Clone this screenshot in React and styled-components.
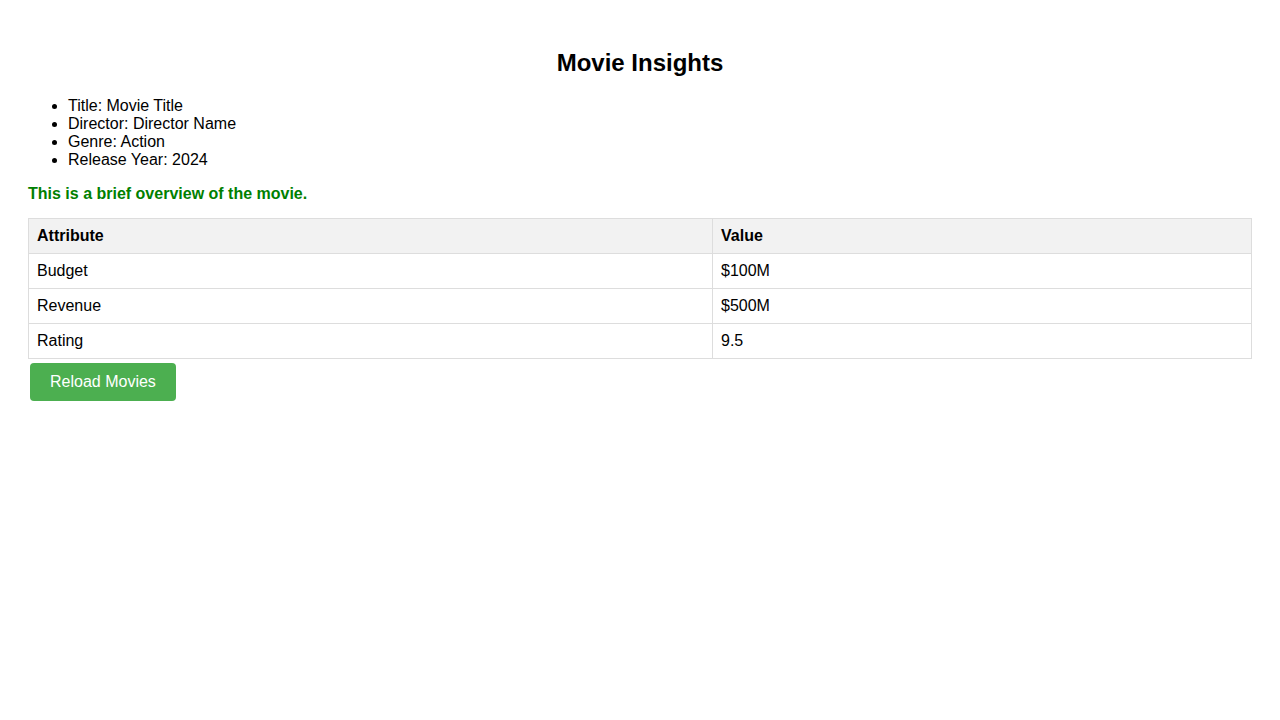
import React from "react";
import styled, { createGlobalStyle } from "styled-components";

const GlobalStyle = createGlobalStyle`
  body {
    margin: 8px;
    font-family: "Liberation Sans", Arial, sans-serif;
    font-size: 16px;
    color: #000;
    background: #fff;
  }
`;

const Container = styled.div`
  padding: 20px;
`;

const Title = styled.h2`
  text-align: center;
  font-size: 24px;
  font-weight: bold;
  margin: 21px 0 20px;
`;

const InfoList = styled.ul`
  margin: 16px 0;
  padding-left: 40px;
`;

const Overview = styled.p`
  color: green;
  font-weight: bold;
  margin: 16px 0 15px;
`;

const Table = styled.table`
  width: 100%;
  border-collapse: collapse;
`;

const Th = styled.th`
  border: 1px solid #ddd;
  padding: 8px;
  text-align: left;
  background: #f2f2f2;
`;

const Td = styled.td`
  border: 1px solid #ddd;
  padding: 8px;
  text-align: left;
`;

const Button = styled.button`
  background: #4caf50;
  color: #fff;
  border: none;
  border-radius: 4px;
  padding: 10px 20px;
  margin: 4px 2px;
  font-family: "Liberation Sans", Arial, sans-serif;
  font-size: 16px;
  cursor: pointer;
`;

const rows = [
  ["Budget", "$100M"],
  ["Revenue", "$500M"],
  ["Rating", "9.5"],
];

export default function App() {
  return (
    <>
      <GlobalStyle />
      <Container>
        <Title>Movie Insights</Title>
        <InfoList>
          <li>Title: Movie Title</li>
          <li>Director: Director Name</li>
          <li>Genre: Action</li>
          <li>Release Year: 2024</li>
        </InfoList>
        <Overview>This is a brief overview of the movie.</Overview>
        <Table>
          <thead>
            <tr>
              <Th>Attribute</Th>
              <Th>Value</Th>
            </tr>
          </thead>
          <tbody>
            {rows.map(([a, v]) => (
              <tr key={a}>
                <Td>{a}</Td>
                <Td>{v}</Td>
              </tr>
            ))}
          </tbody>
        </Table>
        <Button>Reload Movies</Button>
      </Container>
    </>
  );
}
